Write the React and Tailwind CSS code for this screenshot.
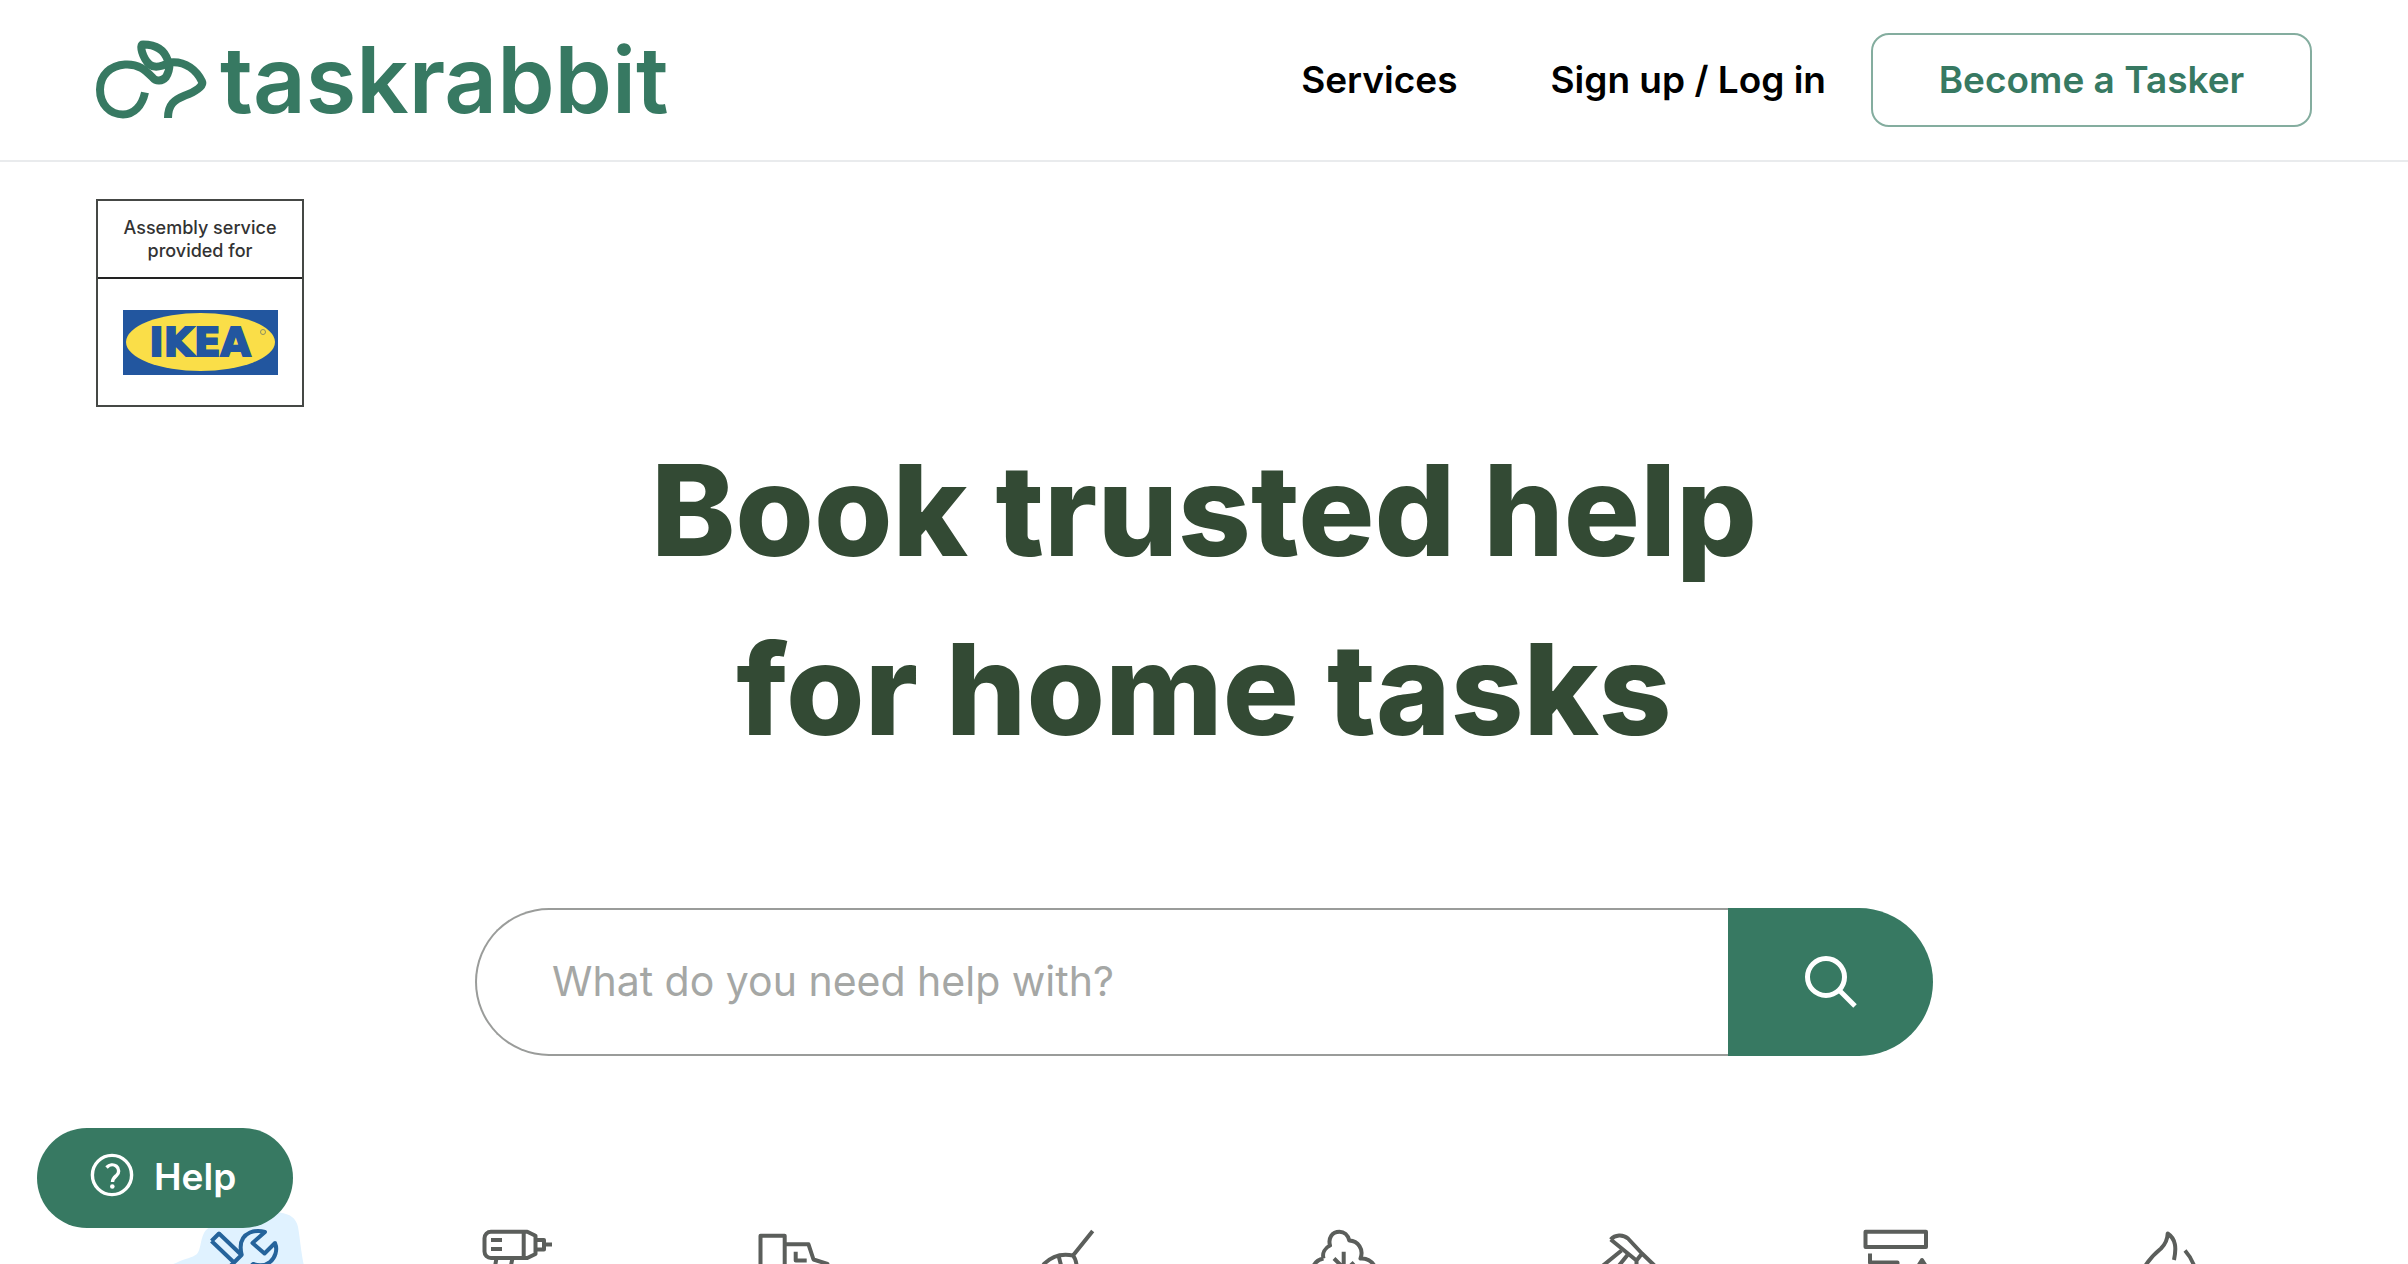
import { useState } from 'react';

const CATEGORIES = [
  { label: 'Assembly', Icon: AssemblyIcon, active: true },
  { label: 'Mounting', Icon: DrillIcon },
  { label: 'Moving', Icon: TruckIcon },
  { label: 'Cleaning', Icon: BroomIcon },
  { label: 'Outdoor Help', Icon: TreeIcon },
  { label: 'Home Repairs', Icon: HammerIcon },
  { label: 'Painting', Icon: PaintIcon },
  { label: 'Trending', Icon: FlameIcon },
];

export default function App() {
  const [query, setQuery] = useState('');

  return (
    <div className="relative h-screen overflow-hidden bg-white font-['Inter',sans-serif] text-black">
      <Header />

      <main>
        <div className="px-24 pt-[37px]">
          <IkeaBadge />
        </div>

        <h1 className="mt-[14px] text-center text-[127px] leading-[179px] font-extrabold text-[#334a34]">
          Book trusted help
          <br />
          for home tasks
        </h1>

        {/* Task search */}
        <form
          role="search"
          onSubmit={(e) => e.preventDefault()}
          className="mx-auto mt-[129px] flex h-[148px] max-w-[1458px]"
        >
          <input
            type="text"
            aria-label="What do you need help with?"
            placeholder="What do you need help with?"
            value={query}
            onChange={(e) => setQuery(e.target.value)}
            className="min-w-0 flex-1 rounded-l-full border-2 border-r-0 border-[#9a9c9a] pl-[75px] text-[41px] outline-none placeholder:text-[#a5a7a5]"
          />
          <button
            type="submit"
            aria-label="Search"
            className="flex w-[205px] items-center justify-center rounded-r-full bg-[#377962] text-white"
          >
            <svg viewBox="0 0 54 54" className="size-[54px]" fill="none" stroke="currentColor" strokeWidth="5">
              <circle cx="22" cy="22" r="18.5" />
              <path d="M35.5 35.5 51 51" />
            </svg>
          </button>
        </form>

        {/* Category tabs */}
        <nav aria-label="Categories" className="mt-[168px] grid grid-cols-8 px-[104px]">
          {CATEGORIES.map(({ label, Icon, active }) => (
            <a
              key={label}
              href="#"
              aria-label={label}
              className={active ? 'flex justify-center text-[#25639b]' : 'flex justify-center text-[#5b5e5b]'}
            >
              <Icon />
            </a>
          ))}
        </nav>
      </main>

      <button
        type="button"
        className="absolute bottom-9 left-[37px] flex h-[100px] w-[256px] items-center gap-[19px] rounded-full bg-[#377962] pb-0.5 pl-[54px] text-[37px] font-semibold text-white"
      >
        <svg viewBox="0 0 44 44" className="size-[44px] overflow-visible" fill="none" stroke="currentColor" strokeWidth="3.4">
          <circle cx="21" cy="20" r="19.6" />
          <path d="M15.500 12.500c3-3 7-3.500 9.800-1.300 3.200 2.600 3 6.800.2 9.300-2.500 2.200-4 3.300-4 6.500" />
          <circle cx="21.300" cy="31.500" r="2.300" fill="currentColor" stroke="none" />
        </svg>
        Help
      </button>
    </div>
  );
}

function Header() {
  return (
    <header className="flex h-[162px] items-center border-b-2 border-[#e9ebed] px-24">
      <a href="#" className="flex items-center gap-3 text-[#377962]">
        <RabbitMark />
        <span className="text-[92px] leading-[94px] font-semibold">taskrabbit</span>
      </a>
      <nav className="ml-auto flex items-center text-[37px] font-semibold">
        <a href="#" className="mr-[93px]">Services</a>
        <a href="#" className="mr-[45px]">Sign up / Log in</a>
        <a
          href="#"
          className="flex h-[94px] w-[441px] items-center justify-center rounded-[18px] border-2 border-[#84ad9f] text-[#377962]"
        >
          Become a Tasker
        </a>
      </nav>
    </header>
  );
}

function RabbitMark() {
  return (
    <svg viewBox="0 -5 112 90" className="h-[90px] w-[112px]" fill="none" stroke="currentColor" strokeWidth="8">
      <path d="M49 52.500C46 66 38 74.500 27 74.500 14 74.500 4 64.500 4 49.500 4 34.500 15 25.500 29 24.500 44 23.500 51 32 57 38 60 41.500 66 41.500 70 37 72.500 33 73.500 29 73.500 24" />
      <path d="M72 21C69 11 61.500 4.500 47 4.500 43 4.500 46.500 18 53.500 24.500 58 28 65 27 73.500 22.500 90 20.500 101 31 106 41.500 108 46 99 52 89 55.500 78 60 72 64.500 72 78" />
    </svg>
  );
}

function IkeaBadge() {
  return (
    <div className="flex size-[208px] flex-col border-2 border-[#454845]">
      <p className="flex h-[78px] items-center justify-center border-b-2 border-[#222] text-center text-[18px] leading-[23px] font-medium text-[#333]">
        Assembly service
        <br />
        provided for
      </p>
      <div className="flex flex-1 items-center justify-center">
        <svg viewBox="0 0 155 65" className="h-[65px] w-[155px]" role="img" aria-label="IKEA">
          <rect width="155" height="65" fill="#22569f" />
          <ellipse cx="77.500" cy="32" rx="74.500" ry="29" fill="#fade48" />
          <text
            x="77"
            y="46"
            textAnchor="middle"
            fontFamily="DejaVu Sans"
            fontWeight="700"
            fontSize="39"
            fill="#22569f"
            stroke="#22569f"
            strokeWidth="2"
          >
            IKEA
          </text>
          <circle cx="140" cy="22" r="2.500" fill="none" stroke="#8d9062" />
        </svg>
      </div>
    </div>
  );
}

/* Line icons, all drawn on the same 83px grid */
function LineIcon({ children }) {
  return (
    <svg
      viewBox="0 0 83 83"
      className="size-[83px] overflow-visible"
      fill="none"
      stroke="currentColor"
      strokeWidth="4"
      strokeLinejoin="round"
    >
      {children}
    </svg>
  );
}

function AssemblyIcon() {
  return (
    <LineIcon>
      <path
        d="M-30 83C-40 60-40 44-24 39-14 34-8 34-3 30 1 25 0 17 4 9 12-6 60-14 80-11.500 90-10 96-6 98 3 100 14 101 28 104 42L110 83Z"
        fill="#e0f2ff"
        stroke="none"
      />
      <path d="M11.500 17 19 9.500 41.500 31 34 38.500 26 46M11.500 17 34 38.500" />
      <path d="M41.700 31C39 20 42 12 50 8.500 55 6.500 60 6.500 65 8L52.500 19 64.500 29.500 75 19C78 26 75 34 70 38 65 42 59 42 53 40L38 56" />
    </LineIcon>
  );
}

function DrillIcon() {
  return (
    <LineIcon>
      <path d="M52.300 7.700H16a6.500 6.500 0 0 0-6.500 6.500V27.500A6.500 6.500 0 0 0 16 34H52.300L60.500 30V11.700ZM48.700 8V34" />
      <path d="M60.500 16H69V25.500H60.500M69 20.500H77M16 16H27M16 25H27M21.500 34 16 66H31L37.500 34" />
    </LineIcon>
  );
}

function TruckIcon() {
  return (
    <LineIcon>
      <path d="M10.500 66V11.700H34.700V66ZM34.700 20.300H58.500L63.500 35.500 77.500 40V66H34.700" />
      <path d="M45.700 27.700V36.500H56.700" />
    </LineIcon>
  );
}

function BroomIcon() {
  return (
    <LineIcon>
      <path d="M67.700 7 48 31.500C36 29 27 32 19 40L8 58 40 72 52 48C52 41 51 35 48 31.500M33.500 31.500 37 45" />
    </LineIcon>
  );
}

function TreeIcon() {
  return (
    <LineIcon>
      <path d="M23.500 34.500C22 29 25 24 30 21.500 28 14 32 7.700 39.500 7.700 44 7.700 48 11 49.300 16.500 58 17 64 25 60.500 34.500 67 34 72 37 75 43M23.500 34.500C18 35.500 15 38 13 43" />
      <path d="M43.700 27.700V76M34 34.500 43.700 44M54 38.500 43.700 48" />
    </LineIcon>
  );
}

function HammerIcon() {
  return (
    <LineIcon>
      <path d="M35.700 15.500C40 10.500 48 10 53 14.500L67 29.500 61.500 36.500 35.700 15.500M67 29.500 80 42 70 52 61.500 42V36.500" />
      <path d="M46.500 26.500 28 41.500 8 62M52.500 31 44 41.500 18 70" />
    </LineIcon>
  );
}

function PaintIcon() {
  return (
    <LineIcon>
      <path d="M15.500 7.700H76V23H15.500ZM20 29.500V38.500H47.500V46" />
      <path d="M72 36 67 44H77Z" fill="currentColor" />
    </LineIcon>
  );
}

function FlameIcon() {
  return (
    <LineIcon>
      <path d="M49 36C51.500 24 51 15 42.700 9.500 42.500 15 40 20.500 36 24.500 28 31 24 36 20.500 41.500 8 62 20 78 42 78 66 78 78 60 69 41.500 67 36 64 31 60 26.500" />
    </LineIcon>
  );
}
